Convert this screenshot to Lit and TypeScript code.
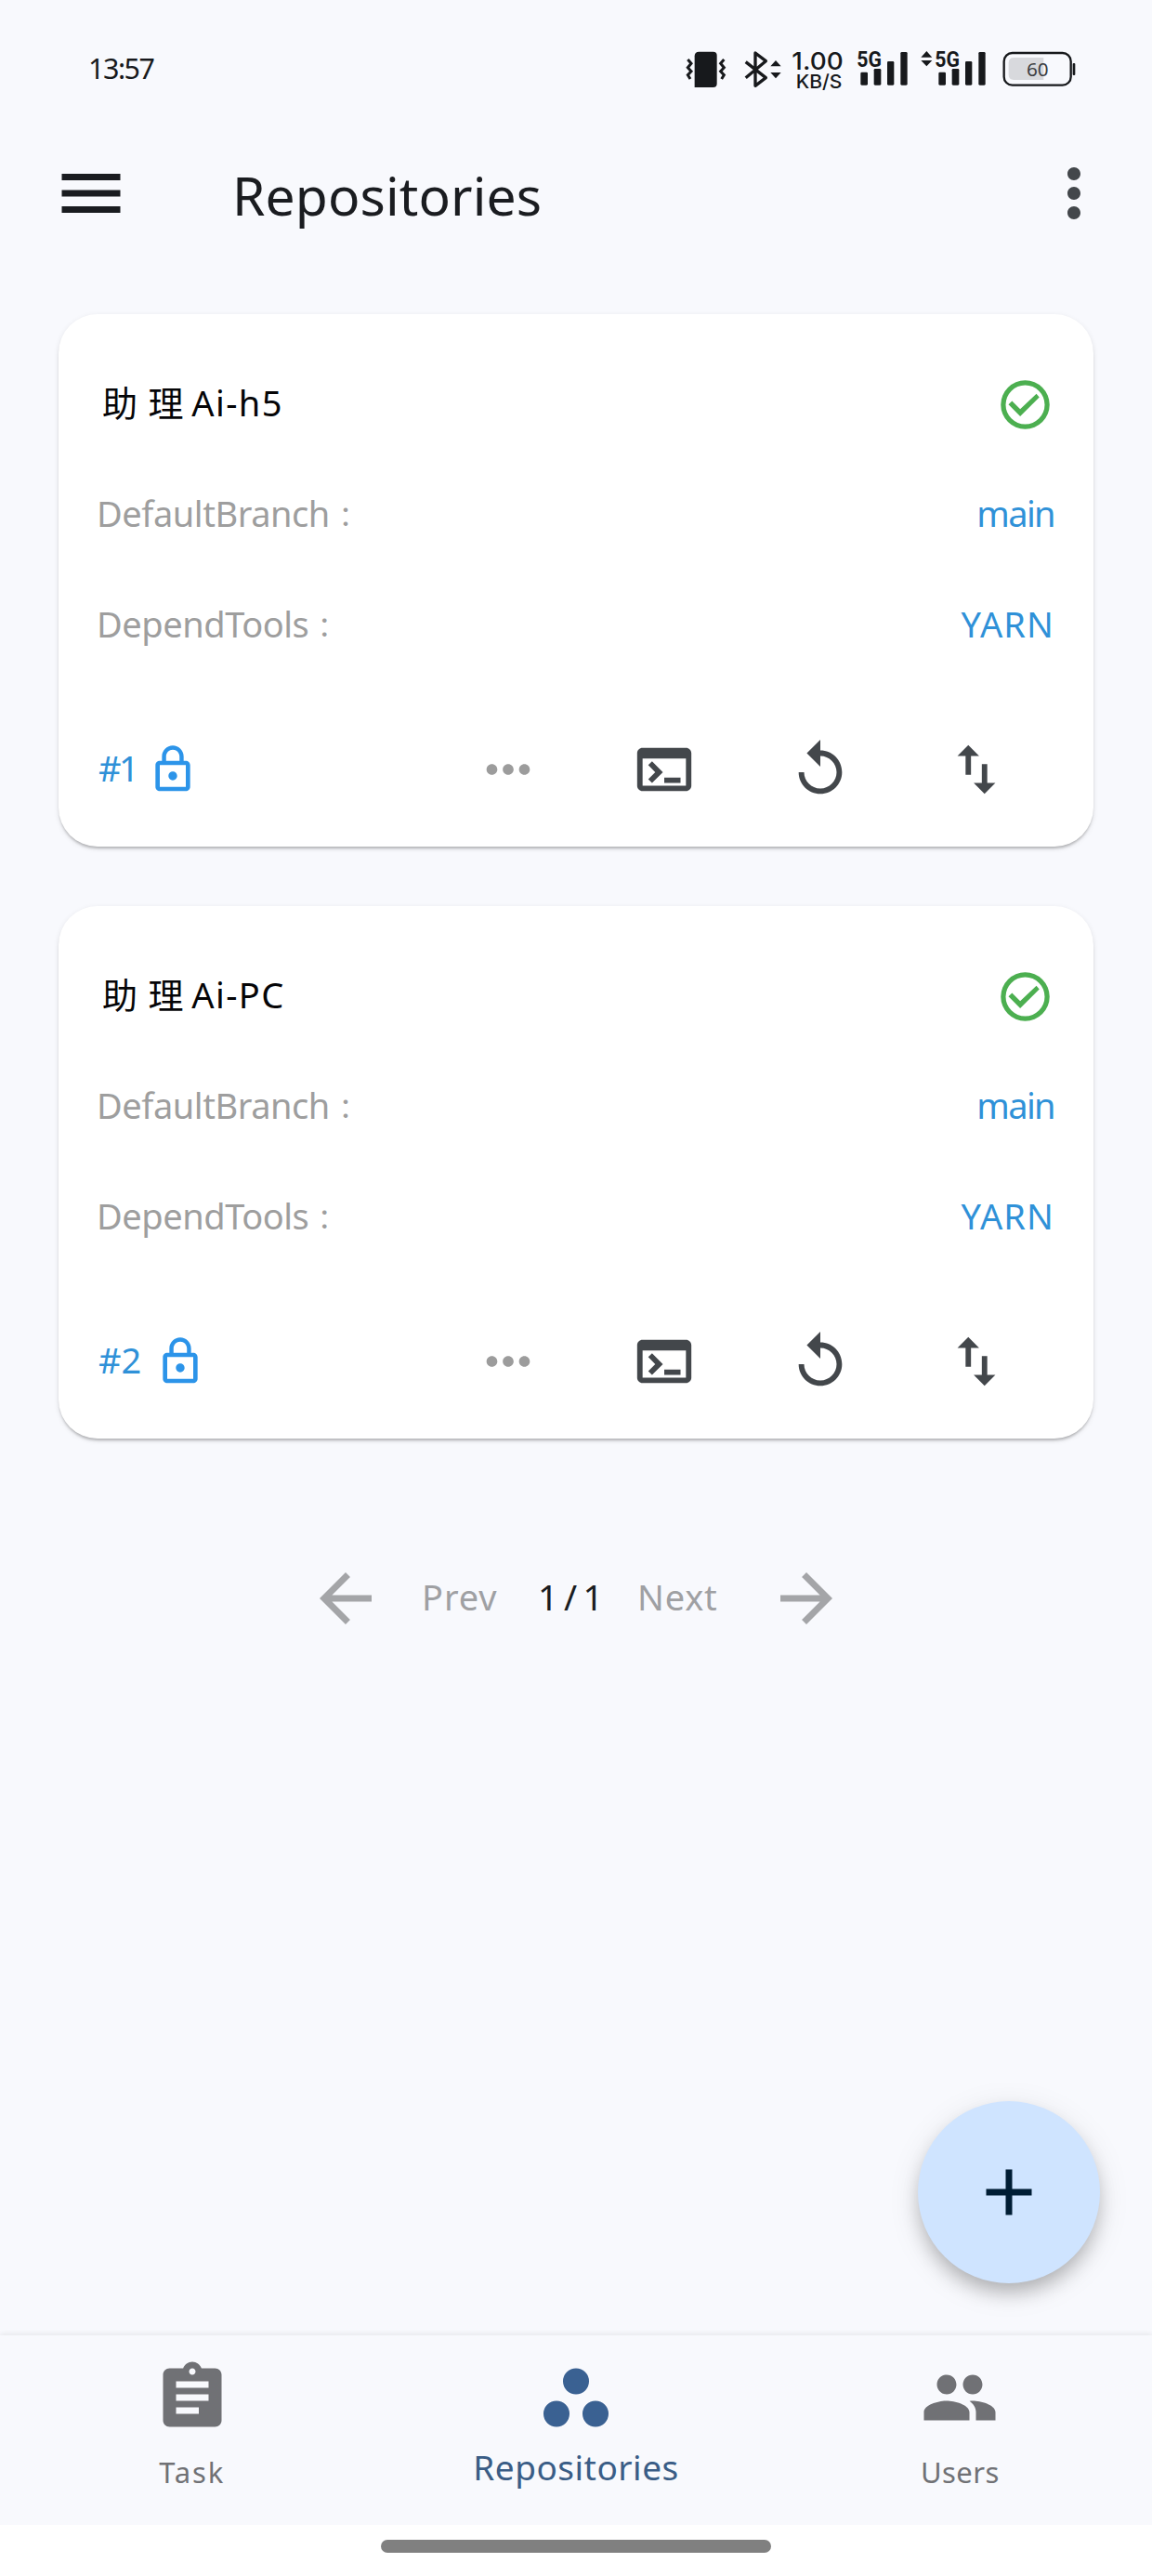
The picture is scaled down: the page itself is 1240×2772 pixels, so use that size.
import { LitElement, html, css, svg } from "lit";
import { customElement, property } from "lit/decorators.js";
import { classMap } from "lit/directives/class-map.js";

interface Repo {
  id: number;
  prefix: string;
  name: string;
  branch: string;
  tools: string;
}

const REPOS: Repo[] = [
  { id: 1, prefix: "助 理", name: "Ai-h5", branch: "main", tools: "YARN" },
  { id: 2, prefix: "助 理", name: "Ai-PC", branch: "main", tools: "YARN" },
];

const ICONS: Record<string, string> = {
  menu: "M3 18h18v-2H3v2zm0-5h18v-2H3v2zm0-7v2h18V6H3z",
  more: "M12 8c1.1 0 2-.9 2-2s-.9-2-2-2-2 .9-2 2 .9 2 2 2zm0 2c-1.1 0-2 .9-2 2s.9 2 2 2 2-.9 2-2-.9-2-2-2zm0 6c-1.1 0-2 .9-2 2s.9 2 2 2 2-.9 2-2-.9-2-2-2z",
  dots: "M6 10c-1.1 0-2 .9-2 2s.9 2 2 2 2-.9 2-2-.9-2-2-2zm12 0c-1.1 0-2 .9-2 2s.9 2 2 2 2-.9 2-2-.9-2-2-2zm-6 0c-1.1 0-2 .9-2 2s.9 2 2 2 2-.9 2-2-.9-2-2-2z",
  check:
    "M12 2a10 10 0 1 0 0 20 10 10 0 0 0 0-20zm0 18a8 8 0 1 1 0-16 8 8 0 0 1 0 16zM5.14 11.95L6.62 10.5 9.95 13.85 16.6 7.55 17.8 8.95 9.95 16.75z",
  lock: "M12 17c1.1 0 2-.9 2-2s-.9-2-2-2-2 .9-2 2 .9 2 2 2zm6-9h-1V6c0-2.76-2.24-5-5-5S7 3.24 7 6v2H6c-1.1 0-2 .9-2 2v10c0 1.1.9 2 2 2h12c1.1 0 2-.9 2-2V10c0-1.1-.9-2-2-2zM8.9 6c0-1.71 1.39-3.1 3.1-3.1s3.1 1.39 3.1 3.1v2H8.9V6zM18 20H6V10h12v10z",
  terminal:
    "M20 4H4c-1.11 0-2 .9-2 2v12c0 1.1.89 2 2 2h16c1.1 0 2-.9 2-2V6c0-1.1-.89-2-2-2zm0 14H4V8h16v10zm-2-1h-6v-2h6v2zM7.5 17l-1.41-1.41L8.67 13l-2.59-2.59L7.5 9l4 4-4 4z",
  replay:
    "M12 5V1L7 6l5 5V7c3.31 0 6 2.69 6 6s-2.69 6-6 6-6-2.69-6-6H4c0 4.42 3.58 8 8 8s8-3.58 8-8-3.58-8-8-8z",
  swap: "M16 17.01V10h-2v7.01h-3L15 21l4-3.99h-3zM9 3L5 6.99h3V14h2V6.99h3L9 3z",
  back: "M20 11H7.83l5.59-5.59L12 4l-8 8 8 8 1.41-1.41L7.83 13H20v-2z",
  forward: "M12 4l-1.41 1.41L16.17 11H4v2h12.17l-5.58 5.59L12 20l8-8z",
  add: "M19 13h-6v6h-2v-6H5v-2h6V5h2v6h6v2z",
  task: "M19 3h-4.18C14.4 1.84 13.3 1 12 1c-1.3 0-2.4.84-2.82 2H5c-1.1 0-2 .9-2 2v14c0 1.1.9 2 2 2h14c1.1 0 2-.9 2-2V5c0-1.1-.9-2-2-2zm-7 0c.55 0 1 .45 1 1s-.45 1-1 1-1-.45-1-1 .45-1 1-1zm2 14H7v-2h7v2zm3-4H7v-2h10v2zm0-4H7V7h10v2z",
  repos:
    "M12 3a4 4 0 1 0 0 8 4 4 0 0 0 0-8zM6 13a4 4 0 1 0 0 8 4 4 0 0 0 0-8zM18 13a4 4 0 1 0 0 8 4 4 0 0 0 0-8z",
  users:
    "M16 11c1.66 0 2.99-1.34 2.99-3S17.66 5 16 5c-1.66 0-3 1.34-3 3s1.34 3 3 3zm-8 0c1.66 0 2.99-1.34 2.99-3S9.66 5 8 5C6.34 5 5 6.34 5 8s1.34 3 3 3zm0 2c-2.33 0-7 1.17-7 3.5V19h14v-2.5c0-2.33-4.67-3.5-7-3.5zm8 0c-.29 0-.62.02-.97.05 1.16.84 1.97 1.97 1.97 3.45V19h6v-2.5c0-2.33-4.67-3.5-7-3.5z",
};

@customElement("ui-icon")
class UiIcon extends LitElement {
  @property() name = "";
  static styles = css`
    :host { display: block; width: 84px; height: 84px; flex: none; }
    svg { display: block; width: 100%; height: 100%; fill: currentColor; }
  `;
  render() {
    return html`<svg viewBox="0 0 24 24"><path fill-rule="evenodd" d=${ICONS[this.name] ?? ""}></path></svg>`;
  }
}

@customElement("status-bar")
class StatusBar extends LitElement {
  static styles = css`
    :host { display: flex; justify-content: space-between; height: 146px; padding: 40px 80px 0 95px; box-sizing: border-box; color: #17191c; }
    .time { font-size: 30.5px; line-height: 66px; letter-spacing: -1.5px; }
    .tray { display: flex; height: 70px; }
    svg { display: block; height: 70px; fill: #17191c; stroke: none; }
    .line { fill: none; stroke: #17191c; }
    .speed { font: 500 78px Inter, "Noto Sans", sans-serif; }
    .unit { font: 500 61px Inter, "Noto Sans", sans-serif; }
    .net { font: 700 72px Roboto, "Noto Sans", sans-serif; }
    .level { font: 400 61px "Noto Sans", sans-serif; fill: #3c3e42; }
  `;

  private bars(x: number) {
    return svg`
      <text class="net" x=${x - 12} y="95" textLength="80" lengthAdjust="spacingAndGlyphs">5G</text>
      <rect x=${x} y="113" width="23" height="42" rx="4"></rect>
      <rect x=${x + 43} y="102" width="23" height="53" rx="4"></rect>
      <rect x=${x + 86} y="78" width="22" height="77" rx="4"></rect>
      <rect x=${x + 129} y="48" width="22" height="107" rx="4"></rect>`;
  }

  render() {
    return html`
      <div class="time">13:57</div>
      <div class="tray">
        <svg width="65" viewBox="35 0 195 210">
          <path d="M96 47H142Q154 47 154 59V150Q154 162 142 162H82V61Q82 47 96 47Z"></path>
          <path class="line" stroke-width="9" d="M60 72L71 85 60 98 71 110 60 122 68 135M177 72L166 85 177 98 166 110 177 122 169 135"></path>
        </svg>
        <svg width="52" viewBox="230 0 156 210">
          <path class="line" stroke-width="10" stroke-linejoin="round" d="M247 80L312 131 278 157V51L312 77 247 131"></path>
          <path d="M344 75L361 94H327ZM344 133L361 114H327Z"></path>
        </svg>
        <svg width="69" viewBox="386 0 207 210">
          <text class="speed" x="396" y="104" textLength="166" lengthAdjust="spacingAndGlyphs">1.00</text>
          <text class="unit" x="409" y="164" textLength="149" lengthAdjust="spacingAndGlyphs">KB/S</text>
        </svg>
        <svg width="65" viewBox="593 0 195 210">${this.bars(618)}</svg>
        <svg width="87" viewBox="788 0 261 210">
          <path d="M831 45L849 65H813ZM831 94L849 75H813Z"></path>
          ${this.bars(870)}
        </svg>
        <svg width="90" viewBox="1049 0 270 210">
          <rect class="line" stroke-width="7" x="1081" y="51" width="216" height="104" rx="27"></rect>
          <path fill="#d8d9dd" d="M1113 66H1209V138H1113Q1096 138 1096 121V83Q1096 66 1113 66Z"></path>
          <rect x="1303" y="84" width="8" height="39" rx="3"></rect>
          <text class="level" x="1154" y="125" textLength="71" lengthAdjust="spacingAndGlyphs">60</text>
        </svg>
      </div>`;
  }
}

@customElement("repo-card")
class RepoCard extends LitElement {
  @property({ attribute: false }) repo!: Repo;
  static styles = css`
    :host {
      display: block; height: 573px; box-sizing: border-box; padding: 35px 42px 0 41px;
      background: #fff; border-radius: 42px;
      box-shadow: 0 3px 3px -1px rgba(0, 0, 0, 0.24), 0 2px 6px rgba(0, 0, 0, 0.09);
    }
    .row { display: flex; align-items: center; justify-content: space-between; height: 119px; font-size: 38px; line-height: 60px; }
    .title { display: flex; gap: 8px; padding-left: 6px; color: #050507; letter-spacing: 0.8px; }
    .name { letter-spacing: 1.4px; }
    .check { width: 63px; height: 63px; margin-top: 5px; color: #4caf50; }
    .label { color: #9e9e9e; letter-spacing: -0.45px; }
    .colon { font-size: 30px; line-height: 1; margin-left: 2px; }
    .value { color: #2f91d8; letter-spacing: 1.1px; }
    .branch { letter-spacing: -1.6px; }
    .foot { display: flex; align-items: center; height: 70px; margin: 63px 49px 0 2px; }
    .id { font-size: 38px; line-height: 60px; margin: 0 14px 5px 0; color: #2f91d8; }
    .id.narrow { margin-right: 11px; letter-spacing: -2.5px; }
    .lock { width: 56px; height: 56px; color: #2c94e9; }
    .actions { display: flex; gap: 98px; margin-left: auto; color: #43474b; }
    .actions ui-icon { width: 70px; height: 70px; }
    .actions .muted { color: #9c9c9c; }
  `;
  render() {
    const r = this.repo;
    return html`
      <div class="row">
        <span class="title"><span>${r.prefix}</span><span class="name">${r.name}</span></span>
        <ui-icon class="check" name="check"></ui-icon>
      </div>
      <div class="row">
        <span class="label">DefaultBranch<span class="colon">：</span></span>
        <span class="value branch">${r.branch}</span>
      </div>
      <div class="row">
        <span class="label">DependTools<span class="colon">：</span></span>
        <span class="value">${r.tools}</span>
      </div>
      <div class="foot">
        <span class=${classMap({ id: true, narrow: r.id === 1 })}>#${r.id}</span>
        <ui-icon class="lock" name="lock"></ui-icon>
        <div class="actions">
          <ui-icon class="muted" name="dots"></ui-icon>
          <ui-icon name="terminal"></ui-icon>
          <ui-icon name="replay"></ui-icon>
          <ui-icon name="swap"></ui-icon>
        </div>
      </div>`;
  }
}

@customElement("app-root")
class AppRoot extends LitElement {
  static styles = css`
    :host {
      display: flex; flex-direction: column; position: relative; width: 1240px; height: 2772px;
      background: #f8f9fd; color: #1a1c20; overflow: hidden;
      font-family: "Noto Sans", "Noto Sans CJK TC", sans-serif;
    }
    .appbar { display: flex; align-items: center; height: 124px; padding: 0 42px 0 56px; }
    .appbar h1 { flex: 1; margin: 3px 0 0 110px; font-size: 57px; line-height: 80px; font-weight: 400; letter-spacing: 0.1px; }
    .appbar .more { color: #43474b; }
    .list { display: flex; flex-direction: column; gap: 64px; padding: 68px 63px 0; }
    .pager { display: grid; grid-template-columns: 84px 165px 107px 140px 84px; justify-content: center; align-items: center; margin-top: 130px; font-size: 38px; line-height: 60px; color: #9fa0a3; }
    .pager span { margin-bottom: 4px; }
    .pager .prev { padding-left: 40px; letter-spacing: 0.9px; }
    .pager .page { color: #1a1c20; letter-spacing: -1.8px; }
    .pager .next { letter-spacing: 0.8px; }
    .pager ui-icon { color: #a4a5a8; }
    .fab {
      position: absolute; left: 988px; top: 2261px; width: 196px; height: 196px; border-radius: 50%;
      display: flex; align-items: center; justify-content: center; background: #cfe4ff; color: #001d34;
      box-shadow: 0 12px 20px -3px rgba(0, 0, 0, 0.24), 0 8px 34px rgba(0, 0, 0, 0.1);
    }
    .nav { display: flex; height: 204px; margin-top: auto; background: #f8f9fd; box-shadow: 0 -2px 5px rgba(0, 0, 0, 0.07); }
    .tab { flex: 1; display: flex; flex-direction: column; align-items: center; padding-top: 25px; color: #707175; font-size: 31px; letter-spacing: 0.4px; }
    .tab span { line-height: 50px; margin-top: 13px; }
    .tab.task { letter-spacing: 1.8px; }
    .tab.on { color: #3a6192; font-size: 37px; letter-spacing: 0.5px; }
    .tab.on span { margin-top: 8px; color: #3a5d86; }
    .home { display: flex; justify-content: center; height: 55px; background: #fff; }
    .home i { width: 420px; height: 14px; margin-top: 16px; border-radius: 7px; background: #808080; }
  `;
  render() {
    return html`
      <status-bar></status-bar>
      <header class="appbar">
        <ui-icon name="menu"></ui-icon>
        <h1>Repositories</h1>
        <ui-icon class="more" name="more"></ui-icon>
      </header>
      <main class="list">${REPOS.map((r) => html`<repo-card .repo=${r}></repo-card>`)}</main>
      <div class="pager">
        <ui-icon name="back"></ui-icon>
        <span class="prev">Prev</span>
        <span class="page">1 / 1</span>
        <span class="next">Next</span>
        <ui-icon name="forward"></ui-icon>
      </div>
      <div class="fab"><ui-icon name="add"></ui-icon></div>
      <nav class="nav">
        <div class="tab task"><ui-icon name="task"></ui-icon><span>Task</span></div>
        <div class="tab on"><ui-icon name="repos"></ui-icon><span>Repositories</span></div>
        <div class="tab"><ui-icon name="users"></ui-icon><span>Users</span></div>
      </nav>
      <div class="home"><i></i></div>`;
  }
}
